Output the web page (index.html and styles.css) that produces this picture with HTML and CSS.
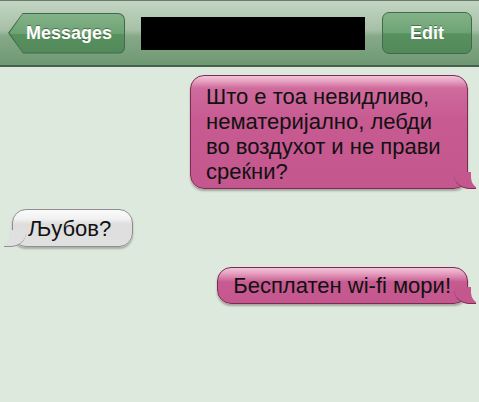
FILE: index.html
```html
<!DOCTYPE html>
<html lang="mk">
<head>
    <meta charset="UTF-8">
    <meta name="viewport" content="width=device-width, initial-scale=1.0">
    <link rel="stylesheet" href="styles.css">
</head>
<body>
    <div class="topbar">
        <div class="back">
            <div class="back-inner">Messages</div>
        </div>
        <div class="title"></div>
        <div class="edit">Edit</div>
    </div>

    <div class="thread">
        <div class="row sent">
            <div class="bubble pink wide">Што е тоа невидливо,<br>нематеријално, лебди<br>во воздухот и не прави<br>среќни?</div>
        </div>
        <div class="row received">
            <div class="bubble gray">Љубов?</div>
        </div>
        <div class="row sent">
            <div class="bubble pink">Бесплатен wi-fi мори!</div>
        </div>
    </div>
</body>
</html>
```

FILE: styles.css
```css
body {
    margin: 0;
    background-color: #dde9dc;
    font-family: 'Liberation Sans', Arial, sans-serif;
    width: 479px;
    height: 402px;
    overflow: hidden;
}

.topbar {
    height: 64px;
    border-top: 1px solid #6a7a6c;
    border-bottom: 2px solid #46614b;
    background: linear-gradient(#c3d5c3, #a6c0a6 45%, #86a988 55%, #6e9872);
    display: flex;
    align-items: center;
    padding: 0 7px 0 8px;
    box-sizing: content-box;
}

.back {
    width: 117px;
    height: 41px;
    padding: 1px;
    box-sizing: border-box;
    background: #3f6b48;
    border-radius: 0 7px 7px 0;
    clip-path: polygon(15px 0, 100% 0, 100% 100%, 15px 100%, 0 50%);
}

.back-inner {
    height: 100%;
    border-radius: 0 6px 6px 0;
    background: linear-gradient(#84b288, #6da373 50%, #58905e 52%, #52895a);
    clip-path: polygon(14px 0, 100% 0, 100% 100%, 14px 100%, 0.5px 50%);
    color: #fff;
    font-weight: bold;
    font-size: 18px;
    display: flex;
    align-items: center;
    justify-content: flex-end;
    padding-right: 12px;
    text-shadow: 0 -1px 0 rgba(0, 0, 0, 0.35);
}

.title {
    width: 224px;
    height: 33px;
    background: #000;
    margin-left: 16px;
}

.edit {
    width: 90px;
    height: 42px;
    margin-left: auto;
    box-sizing: border-box;
    border: 1px solid #3f6b48;
    border-radius: 7px;
    background: linear-gradient(#84b288, #6da373 50%, #58905e 52%, #52895a);
    color: #fff;
    font-weight: bold;
    font-size: 18px;
    display: flex;
    align-items: center;
    justify-content: center;
    text-shadow: 0 -1px 0 rgba(0, 0, 0, 0.35);
}

.thread {
    display: flex;
    flex-direction: column;
    padding: 8px 11px 0 12px;
}

.row {
    display: flex;
}

.row.sent {
    justify-content: flex-end;
}

.row + .row {
    margin-top: 20px;
}

.bubble {
    position: relative;
    font-size: 22px;
    line-height: 25px;
    color: #111;
    border-radius: 14px;
    padding: 7px 15px 6px 15px;
    white-space: nowrap;
}

.pink {
    background: linear-gradient(#f0c6d9, #e49bbd 6px, #cf6b9d 12px, #c75a91 40%, #c4578e);
    border: 1px solid #7d2b52;
    box-shadow: 0 2px 2px rgba(60, 40, 50, 0.35);
}

.wide {
    width: 246px;
    padding: 8px 15px 4px 15px;
}

.gray {
    background: linear-gradient(#fbfbfb, #f1f1f1 9px, #dedede 14px, #e0e0e0);
    border: 1px solid #8f8f8f;
    box-shadow: 0 2px 2px rgba(0, 0, 0, 0.25);
    padding: 6px 21px 5px 15px;
}

.row + .row .pink {
    padding: 5px 16px 5px 15px;
}

/* bubble tails */
.bubble::before,
.bubble::after {
    content: "";
    position: absolute;
    bottom: -1px;
}

.pink::before {
    right: -9px;
    width: 22px;
    height: 16px;
    background: #c4578e;
    border-bottom: 1px solid #7d2b52;
    border-bottom-left-radius: 16px 14px;
}

.pink::after {
    right: -16px;
    width: 12px;
    height: 20px;
    background: #dde9dc;
    border-bottom-left-radius: 11px 12px;
}

.gray::before {
    left: -9px;
    width: 22px;
    height: 16px;
    background: #e0e0e0;
    border-bottom: 1px solid #8f8f8f;
    border-bottom-right-radius: 16px 14px;
}

.gray::after {
    left: -16px;
    width: 12px;
    height: 20px;
    background: #dde9dc;
    border-bottom-right-radius: 11px 12px;
}
```
